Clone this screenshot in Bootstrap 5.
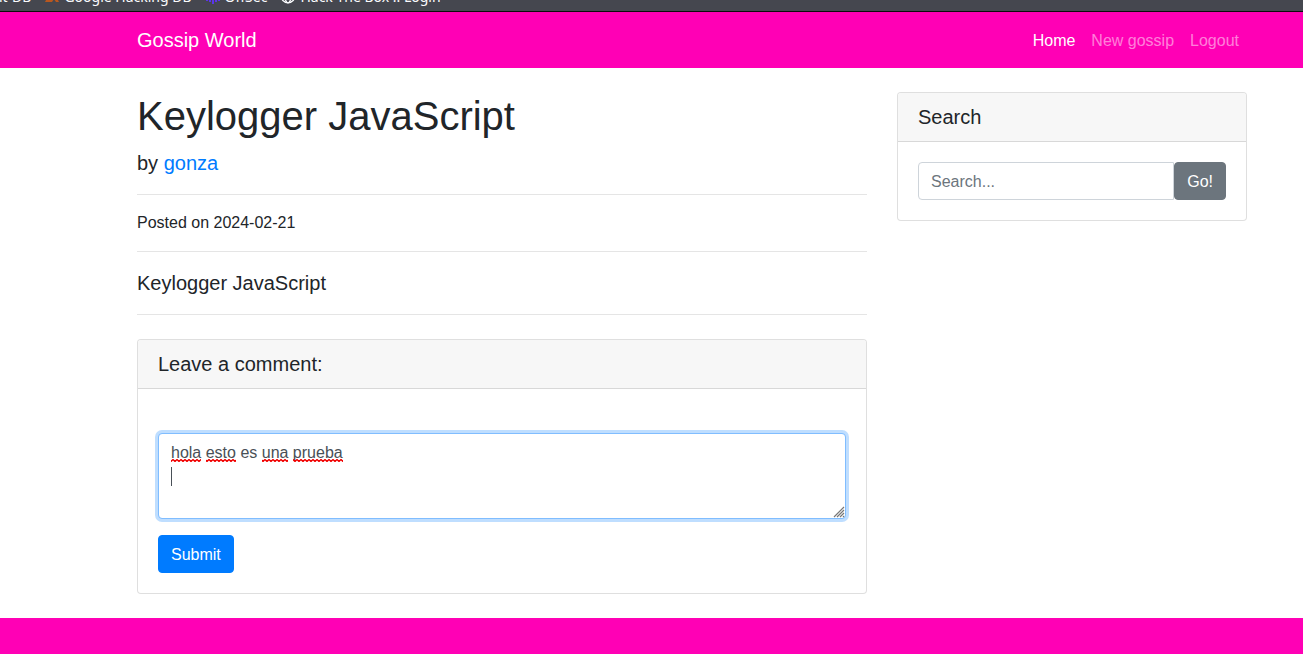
<!DOCTYPE html>
<html lang="en">
<head>
<meta charset="utf-8">
<meta name="viewport" content="width=device-width, initial-scale=1">
<title>Gossip World</title>
<link href="https://cdn.jsdelivr.net/npm/bootstrap@5.3.0/dist/css/bootstrap.min.css" rel="stylesheet">
<style>
:root { --gossip-pink: #ff00b5; --page-shift: 81px; }
body { font-family: "Liberation Sans", Arial, sans-serif; color: #212529; background: #fff; }
.page-band { padding-left: var(--page-shift); }
.container, .row { --bs-gutter-x: 30px; }
.bookmarks { height: 12px; overflow: hidden; background: #45474f; border-bottom: 1px solid #0c0c0d; font: 14px/20px "Noto Sans", sans-serif; align-items: flex-end; }
.bookmarks ul { height: 20px; margin-bottom: 4px; gap: 13px; margin-left: -37px; }
.bookmarks a { color: #fbfbfe; text-decoration: none; display: flex; align-items: center; gap: 4px; white-space: nowrap; }
.bookmarks svg { flex: none; }
.pink { background: var(--gossip-pink); }
.navbar { --bs-navbar-color: rgba(255,255,255,.5); --bs-navbar-active-color: #fff; --bs-navbar-brand-color: #fff; --bs-navbar-brand-hover-color: #fff; --bs-navbar-hover-color: rgba(255,255,255,.75); }
.navbar .nav-link { padding-top: 9px; padding-bottom: 7px; }
h1 { font-size: 40px; }
a.author { color: #007bff; text-decoration: none; }
hr { border-top: 1px solid rgba(0,0,0,.1); opacity: 1; }
.card { --bs-card-border-color: rgba(0,0,0,.125); --bs-card-cap-bg: #f7f7f7; --bs-card-border-radius: 4px; --bs-card-inner-border-radius: 3px; --bs-card-spacer-x: 20px; --bs-card-spacer-y: 20px; --bs-card-cap-padding-x: 20px; --bs-card-cap-padding-y: 12px; }
.card-header { line-height: 24px; }
.form-control, .btn { padding-top: 7px; padding-bottom: 5px; border-radius: 4px; }
.form-control { border-color: #ced4da; }
.form-control::placeholder { color: #6c757d; }
.btn-primary { --bs-btn-bg: #007bff; --bs-btn-border-color: #007bff; }
.btn-secondary { --bs-btn-bg: #6c757d; --bs-btn-border-color: #6c757d; }
.comment-box { display: block; color: #495057; border-color: #80bdff; box-shadow: 0 0 0 3px #bfdeff; resize: none; }
.spelling { position: absolute; left: 0; top: 0; pointer-events: none; }
.grip { position: absolute; right: 1px; bottom: 1px; pointer-events: none; }
footer { height: 36px; }
</style>
</head>
<body>
<div class="bookmarks d-flex">
  <ul class="list-unstyled d-flex">
    <li><a href="#">Exploit-DB</a></li>
    <li><a href="#"><svg width="16" height="16" viewBox="0 0 16 16"><path d="M1 13l3-6 3 4 3-8 5 10h-3l-2-3-2 3z" fill="#b8571f"/></svg>Google Hacking DB</a></li>
    <li><a href="#"><svg width="16" height="16" viewBox="0 0 16 16"><path d="M2 3v9M5 1v12M8 1v14M11 1v12M14 3v9" stroke="#5a35e8" stroke-width="2"/></svg>OffSec</a></li>
    <li><a href="#"><svg width="16" height="16" viewBox="0 0 16 16" fill="none" stroke="#fbfbfe" stroke-width="1.3"><circle cx="8" cy="7" r="6.8"/><ellipse cx="8" cy="7" rx="3" ry="6.8"/><path d="M1 7h14M2 10h12"/></svg>Hack The Box :: Login</a></li>
  </ul>
</div>
<nav class="navbar navbar-expand pink page-band py-2">
  <div class="container">
    <a class="navbar-brand py-1" href="#">Gossip World</a>
    <ul class="navbar-nav ms-auto">
      <li class="nav-item"><a class="nav-link active" aria-current="page" href="#">Home</a></li>
      <li class="nav-item"><a class="nav-link" href="#">New gossip</a></li>
      <li class="nav-item"><a class="nav-link" href="#">Logout</a></li>
    </ul>
  </div>
</nav>
<div class="page-band">
  <main class="container">
    <div class="row">
      <div class="col-8">
        <h1 class="mt-4 fw-normal">Keylogger JavaScript</h1>
        <p class="fs-5 mb-3">by <a class="author" href="#">gonza</a></p>
        <hr>
        <p>Posted on 2024-02-21</p>
        <hr>
        <p class="fs-5">Keylogger JavaScript</p>
        <hr>
        <div class="card my-4">
          <h5 class="card-header fw-normal"><label for="comment">Leave a comment:</label></h5>
          <div class="card-body">
            <form>
              <div class="position-relative mt-4 mb-3">
                <textarea id="comment" class="form-control comment-box" rows="3" spellcheck="false">hola esto es una prueba
</textarea>
                <svg class="spelling" width="200" height="60" aria-hidden="true">
                  <defs><pattern id="wave" width="4" height="3" patternUnits="userSpaceOnUse" y="26"><path d="M-1 .5L1 2.5L3 .5L5 2.5" fill="none" stroke="#f00000" stroke-width="1.4"/></pattern></defs>
                  <path d="M13 26h30v3h-30zM48 26h30v3h-30zM104 26h26v3h-26zM135 26h50v3h-50z" fill="url(#wave)"/>
                  <path d="M13 34h1v19h-1z" fill="#495057"/>
                </svg>
                <svg class="grip" width="12" height="12" aria-hidden="true"><path d="M1 11L11 1M4 11L11 4M7 11L11 7M10 11L11 10" stroke="#777" stroke-width="1.2"/></svg>
              </div>
              <button type="submit" class="btn btn-primary">Submit</button>
            </form>
          </div>
        </div>
      </div>
      <div class="col-4">
        <div class="card my-4">
          <h5 class="card-header fw-normal"><label for="search">Search</label></h5>
          <div class="card-body">
            <div class="d-flex">
              <input id="search" type="text" class="form-control rounded-end-0" placeholder="Search...">
              <button type="button" class="btn btn-secondary">Go!</button>
            </div>
          </div>
        </div>
      </div>
    </div>
  </main>
</div>
<footer class="pink"></footer>
<script src="https://cdn.jsdelivr.net/npm/bootstrap@5.3.0/dist/js/bootstrap.bundle.min.js"></script>
</body>
</html>
